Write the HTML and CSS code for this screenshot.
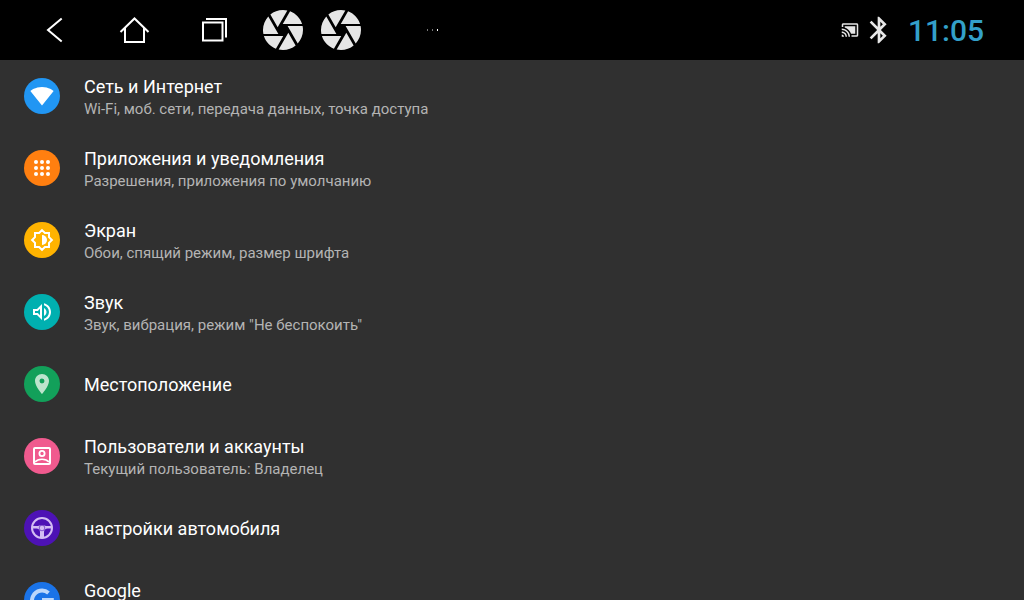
FILE: index.html
```html
<!DOCTYPE html>
<html lang="ru">

	<head>
		<meta charset="UTF-8">
		<title>Настройки</title>
		<link rel="stylesheet" href="styles.css">
	</head>

	<body>
		<!--верхняя панель-->
		<header class="bar">
			<button class="nav-btn" type="button" aria-label="Назад">
				<svg width="36" height="36" viewBox="0 0 36 36"><path class="line" d="M25.7 6.5L12 18l13.7 11.5"/></svg>
			</button>
			<button class="nav-btn" type="button" aria-label="Домой">
				<svg width="36" height="36" viewBox="0 0 36 36"><path class="line" d="M4.5 20l14-13.5 14 13.5M9 16v14h19V16"/></svg>
			</button>
			<button class="nav-btn" type="button" aria-label="Недавние">
				<svg width="36" height="36" viewBox="0 0 36 36"><path class="line" d="M7 10.5h19.5v18H7zM10 7h20v18.5"/></svg>
			</button>
			<button class="app-btn" type="button" aria-label="Камера 1">
				<svg width="48" height="48" viewBox="0 0 24 24"><path d="M9.4 10.5l4.77-8.26C13.47 2.09 12.75 2 12 2c-2.4 0-4.6.85-6.32 2.25l3.66 6.35.06-.1zM21.54 9c-.92-2.92-3.15-5.26-6-6.34L11.88 9h9.66zm.26 1h-7.49l.29.5 4.76 8.25C21 16.97 22 14.61 22 12c0-.69-.07-1.35-.2-2zM8.54 12l-3.9-6.75C3.01 7.03 2 9.39 2 12c0 .69.07 1.35.2 2h7.49l-1.15-2zm-6.08 3c.92 2.92 3.15 5.26 6 6.34L12.12 15H2.46zm11.27 0l-3.9 6.76c.7.15 1.42.24 2.17.24 2.4 0 4.6-.85 6.32-2.25l-3.66-6.35-.93 1.6z"/></svg>
			</button>
			<button class="app-btn" type="button" aria-label="Камера 2">
				<svg width="48" height="48" viewBox="0 0 24 24"><path d="M9.4 10.5l4.77-8.26C13.47 2.09 12.75 2 12 2c-2.4 0-4.6.85-6.32 2.25l3.66 6.35.06-.1zM21.54 9c-.92-2.92-3.15-5.26-6-6.34L11.88 9h9.66zm.26 1h-7.49l.29.5 4.76 8.25C21 16.97 22 14.61 22 12c0-.69-.07-1.35-.2-2zM8.54 12l-3.9-6.75C3.01 7.03 2 9.39 2 12c0 .69.07 1.35.2 2h7.49l-1.15-2zm-6.08 3c.92 2.92 3.15 5.26 6 6.34L12.12 15H2.46zm11.27 0l-3.9 6.76c.7.15 1.42.24 2.17.24 2.4 0 4.6-.85 6.32-2.25l-3.66-6.35-.93 1.6z"/></svg>
			</button>
			<svg class="dots" width="12" height="2" viewBox="0 0 12 2"><path fill="#777" d="M0 0h1v2H0zM5 0h1v2H5z"/><path fill="#fff" d="M10 0h1v2h-1z"/></svg>
			<div class="status">
				<svg width="18" height="18" viewBox="0 0 24 24"><path d="M1 18v3h3c0-1.66-1.34-3-3-3zm0-4v2c2.76 0 5 2.24 5 5h2c0-3.87-3.13-7-7-7zm18-7H5v1.63c3.96 1.28 7.09 4.41 8.37 8.37H19V7zM1 10v2c4.97 0 9 4.03 9 9h2c0-6.08-4.93-11-11-11zm20-7H3c-1.1 0-2 .9-2 2v3h2V5h18v14h-7v2h7c1.1 0 2-.9 2-2V5c0-1.1-.9-2-2-2z"/></svg>
				<svg width="32" height="32" viewBox="0 0 24 24"><path d="M17.71 7.71L12 2h-1v7.59L6.41 5 5 6.41 10.59 12 5 17.59 6.41 19 11 14.41V22h1l5.71-5.71-4.3-4.29 4.3-4.29zM13 5.83l1.88 1.88L13 9.59V5.83zm1.88 10.46L13 18.17v-3.76l1.88 1.88z"/></svg>
				<time class="clock">11:05</time>
			</div>
		</header>

		<!--список настроек-->
		<main class="list">
			<a class="item" href="#">
				<span class="icon blue"><svg width="24" height="24" viewBox="0 0 24 24"><path d="M12 21.5L23.64 7C23.19 6.66 18.71 3 12 3S.81 6.66.36 7z"/></svg></span>
				<span class="text">
					<span class="title">Сеть и Интернет</span>
					<span class="sub">Wi-Fi, моб. сети, передача данных, точка доступа</span>
				</span>
			</a>
			<a class="item" href="#">
				<span class="icon orange"><svg width="24" height="24" viewBox="0 0 24 24">
					<circle cx="6" cy="6" r="2"/><circle cx="12" cy="6" r="2"/><circle cx="18" cy="6" r="2"/>
					<circle cx="6" cy="12" r="2"/><circle cx="12" cy="12" r="2"/><circle cx="18" cy="12" r="2"/>
					<circle cx="6" cy="18" r="2"/><circle cx="12" cy="18" r="2"/><circle cx="18" cy="18" r="2"/>
				</svg></span>
				<span class="text">
					<span class="title">Приложения и уведомления</span>
					<span class="sub">Разрешения, приложения по умолчанию</span>
				</span>
			</a>
			<a class="item" href="#">
				<span class="icon yellow"><svg width="24" height="24" viewBox="0 0 24 24"><path fill="none" stroke="#fff" stroke-width="2" d="M12 2.1L14.9 5H19v4.1l2.9 2.9-2.9 2.9V19h-4.1L12 21.9 9.1 19H5v-4.1L2.1 12 5 9.1V5h4.1z"/><path d="M12 7a5 5 0 0 1 0 10z"/></svg></span>
				<span class="text">
					<span class="title">Экран</span>
					<span class="sub">Обои, спящий режим, размер шрифта</span>
				</span>
			</a>
			<a class="item" href="#">
				<span class="icon teal"><svg width="24" height="24" viewBox="0 0 24 24"><path d="M3 9v6h4l5 5V4L7 9H3zm7-.17v6.34L7.83 13H5v-2h2.83L10 8.83zM16.5 12c0-1.77-1.02-3.29-2.5-4.03v8.05c1.48-.73 2.5-2.25 2.5-4.02zM14 3.23v2.06c2.89.86 5 3.54 5 6.71s-2.11 5.85-5 6.71v2.06c4.01-.91 7-4.49 7-8.77s-2.99-7.86-7-8.77z"/></svg></span>
				<span class="text">
					<span class="title">Звук</span>
					<span class="sub">Звук, вибрация, режим "Не беспокоить"</span>
				</span>
			</a>
			<a class="item" href="#">
				<span class="icon green"><svg width="24" height="24" viewBox="0 0 24 24"><path d="M12 2C8.13 2 5 5.13 5 9c0 5.25 7 13 7 13s7-7.75 7-13c0-3.87-3.13-7-7-7zm0 9.5a2.5 2.5 0 0 1 0-5 2.5 2.5 0 0 1 0 5z"/></svg></span>
				<span class="text">
					<span class="title">Местоположение</span>
				</span>
			</a>
			<a class="item" href="#">
				<span class="icon pink"><svg width="24" height="24" viewBox="0 0 24 24">
					<rect x="4" y="4" width="16" height="16" rx="1" fill="none" stroke="#fff" stroke-width="2"/>
					<circle cx="12" cy="9.5" r="2.6" fill="none" stroke="#fff" stroke-width="1.8"/>
					<path fill="none" stroke="#fff" stroke-width="1.6" d="M5 18c1.500-1.800 4-2.800 7-2.800s5.500 1 7 2.800"/>
				</svg></span>
				<span class="text">
					<span class="title">Пользователи и аккаунты</span>
					<span class="sub">Текущий пользователь: Владелец</span>
				</span>
			</a>
			<a class="item" href="#">
				<span class="icon violet"><svg width="24" height="24" viewBox="0 0 24 24"><circle cx="12" cy="12" r="10" fill="none" stroke="#d3bdf3" stroke-width="2"/><path d="M2 10h6l1.5-.5h5l1.5.5h6v2.5h-4.500c-2 0-3.500 1.500-3.500 3.500v6h-4v-6c0-2-1.500-3.500-3.500-3.500H2z"/><circle cx="12" cy="12" r="2.8" stroke="#4d12b5" stroke-width=".6"/></svg></span>
				<span class="text">
					<span class="title">настройки автомобиля</span>
				</span>
			</a>
			<a class="item" href="#">
				<span class="icon google"><svg width="24" height="24" viewBox="0 0 24 24"><path fill="none" stroke="#bcd7fb" stroke-width="4" d="M18.5 5A10 10 0 1 0 22 12.5"/><path d="M12 10h11.8v4.5H12z"/></svg></span>
				<span class="text">
					<span class="title">Google</span>
					<span class="sub"></span>
				</span>
			</a>
		</main>
	</body>

</html>
```
FILE: styles.css
```css
* {
	margin: 0;
	padding: 0;
	box-sizing: border-box;
}

body {
	height: 100vh;
	display: flex;
	flex-direction: column;
	overflow: hidden;
	background: #303030;
	color: #fff;
	font-family: Roboto, "Noto Sans", sans-serif;
}

svg {
	display: block;
	fill: currentColor;
}

/*верхняя панель*/

.bar {
	flex: none;
	height: 60px;
	padding: 0 40px 0 14px;
	display: flex;
	align-items: center;
	background: #000;
	color: #e6e6e6;
}

.bar button {
	display: flex;
	align-items: center;
	justify-content: center;
	height: 60px;
	border: 0;
	background: none;
	color: inherit;
	cursor: pointer;
}

.nav-btn {
	width: 80px;
}

.app-btn {
	width: 58px;
}

.line {
	fill: none;
	stroke: #fff;
	stroke-width: 2;
}

.dots {
	margin-left: 57px;
}

.status {
	margin-left: auto;
	display: flex;
	align-items: center;
	gap: 4px;
}

.clock {
	margin-left: 9px;
	padding-top: 2px;
	color: #33a0c9;
	font-size: 30px;
	line-height: 36px;
	font-weight: 500;
}

/*список*/

.list {
	flex: 1;
	min-height: 0;
	overflow: hidden;
}

.item {
	display: flex;
	align-items: center;
	gap: 24px;
	height: 72px;
	padding: 0 24px;
	color: #fff;
	text-decoration: none;
}

.icon {
	flex: none;
	width: 36px;
	height: 36px;
	display: flex;
	align-items: center;
	justify-content: center;
	border-radius: 50%;
}

.text {
	display: flex;
	flex-direction: column;
	padding-top: 2px;
}

.title {
	font-size: 18px;
	line-height: 24px;
}

.sub {
	min-height: 20px;
	font-size: 15px;
	line-height: 20px;
	color: #b4b4b4;
}

.blue {
	background: #2196f3;
}

.orange {
	background: #ff7f10;
}

.yellow {
	background: #ffb300;
}

.teal {
	background: #00b0b0;
}

.green {
	background: #12a05a;
	color: #bce4cd;
}

.pink {
	background: #f05a8e;
}

.violet {
	background: #4d12b5;
	color: #d3bdf3;
}

.google {
	background: #1a73e8;
	color: #bcd7fb;
}
```
